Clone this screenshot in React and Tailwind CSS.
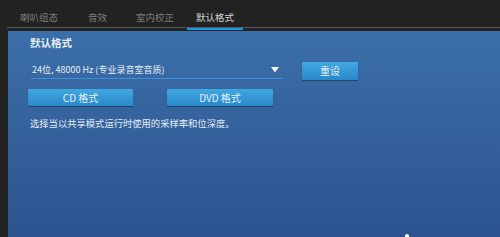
import React from 'react';

const tabs = [
  { label: '喇叭组态', cls: 'ml-[13px]' },
  { label: '音效', cls: 'ml-[30px]' },
  { label: '室内校正', cls: 'ml-[29px]' },
];

const Btn = ({ children, className }) => (
  <button
    className={`flex items-center justify-center rounded-[1px] bg-gradient-to-b from-[#40a8e0] to-[#2a88c9] text-[10px] leading-none text-[#e4eef6] shadow-[0_1px_1px_rgba(0,0,0,0.35)] ${className}`}
  >
    {children}
  </button>
);

export default function App() {
  return (
    <div
      className="relative flex h-[237px] w-[500px] flex-col overflow-hidden bg-[#222222]"
      style={{ fontFamily: '"Noto Sans CJK SC", "Noto Sans", sans-serif' }}
    >
      {/* tabs */}
      <div className="ml-[7px] flex h-[28px] items-end border-b border-[#5a5656]">
        {tabs.map((t, i) => (
          <div key={i} className={`${t.cls} pb-[3px] text-[9.5px] leading-[14px] text-[#7c7c7c]`}>
            {t.label}
          </div>
        ))}
        <div className="relative ml-[13px] px-[9px] pb-[3px] text-[9.5px] leading-[14px] text-[#d4d4d4]">
          默认格式
          <div className="absolute -bottom-[3px] left-0 h-[2px] w-full bg-[#1a9be6]" />
        </div>
      </div>

      {/* panel */}
      <div className="ml-[8px] mt-[3px] flex flex-1 flex-col bg-gradient-to-b from-[#3b6fa9] to-[#2c538f]">
        <div className="ml-[22px] mt-[5px] text-[10.5px] font-bold leading-[14px] text-[#e8eef4]">默认格式</div>

        <div className="mt-[12px] flex items-start">
          <div className="ml-[23px] flex h-[17px] w-[252px] items-center justify-between border-b border-[#3f8fd6] pl-[1px] pr-[4px]">
            <span className="text-[9px] leading-[16px] text-[#e6edf4]">24位, 48000 Hz (专业录音室音质)</span>
            <svg width="8" height="6" viewBox="0 0 8 6">
              <path d="M0 0 H8 L4 5.5 Z" fill="#f2f5f8" />
            </svg>
          </div>
          <Btn className="ml-[19px] h-[18px] w-[56px]">重设</Btn>
        </div>

        <div className="ml-[20px] mt-[9px] flex gap-[34px]">
          <Btn className="h-[17px] w-[105px]">CD 格式</Btn>
          <Btn className="h-[17px] w-[106px]">DVD 格式</Btn>
        </div>

        <div className="ml-[22px] mt-[10px] text-[9.3px] leading-[14px] text-[#e6edf4]">
          选择当以共享模式运行时使用的采样率和位深度。
        </div>
      </div>

      <div className="absolute bottom-[0px] left-[405px] h-[3px] w-[4px] rounded-t-full bg-white" />
    </div>
  );
}
